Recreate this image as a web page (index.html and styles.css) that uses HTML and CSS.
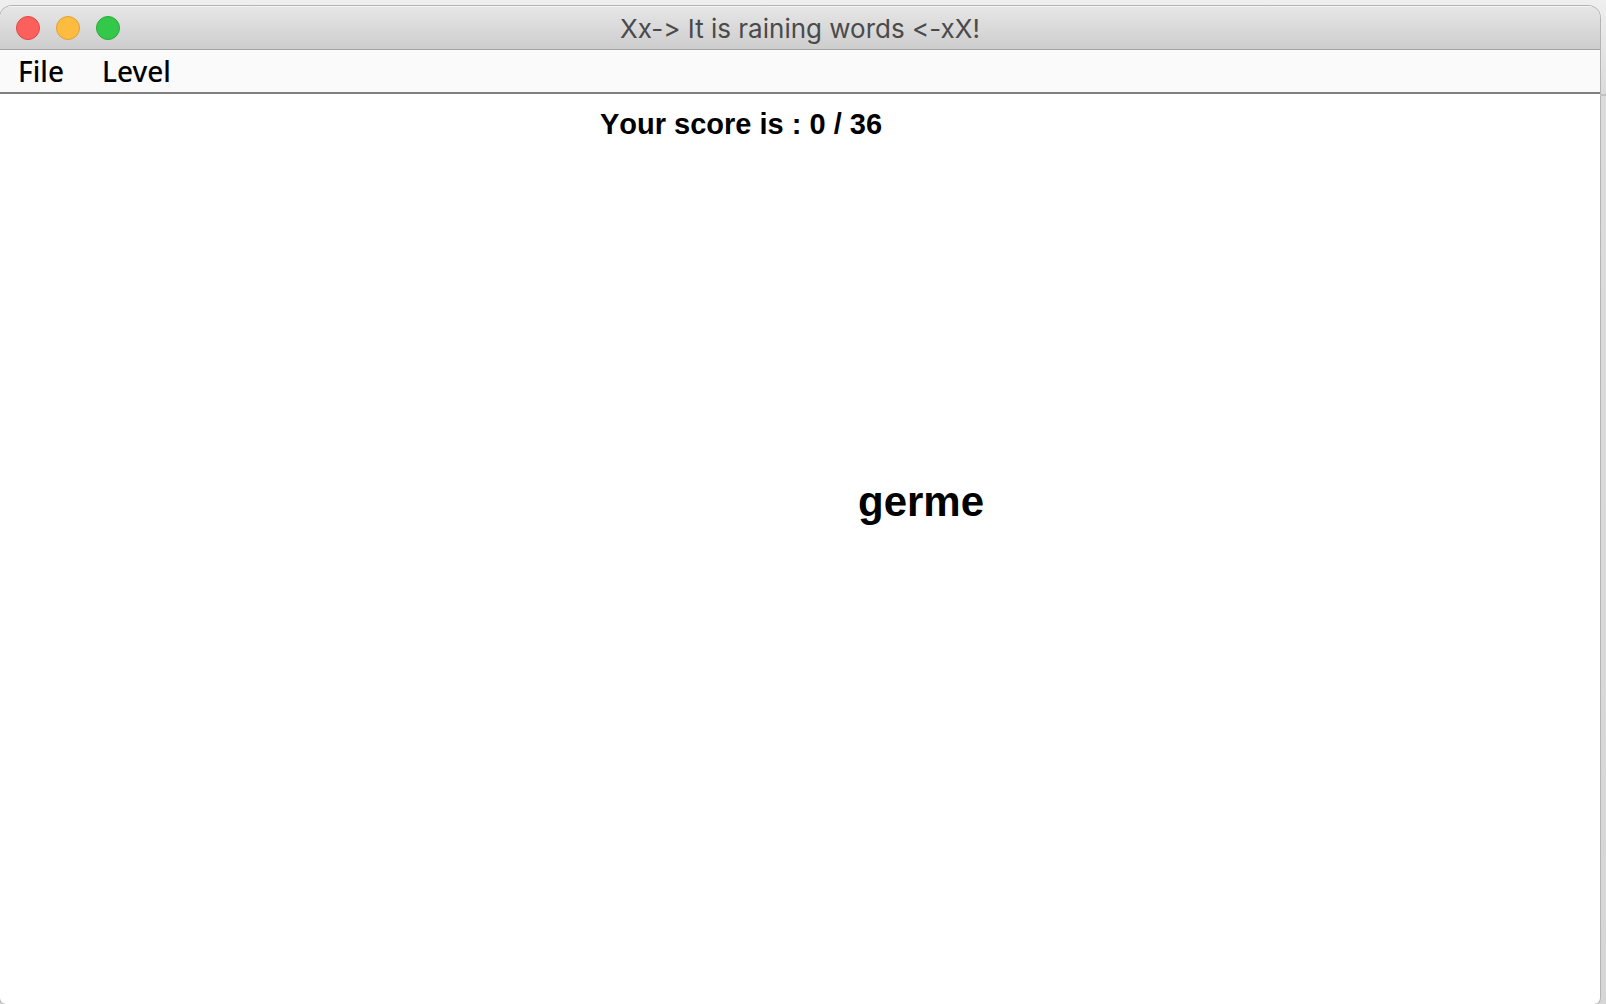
FILE: index.html
```
<!DOCTYPE html>
<html lang="en">
<head>
<meta charset="utf-8">
<title>Xx-&gt; It is raining words &lt;-xX!</title>
<link rel="stylesheet" href="styles.css">
</head>
<body>
<div class="desktop">
  <div class="window">
    <header class="titlebar">
      <div class="controls">
        <button class="control close" type="button" aria-label="Close"></button>
        <button class="control minimize" type="button" aria-label="Minimize"></button>
        <button class="control maximize" type="button" aria-label="Maximize"></button>
      </div>
      <h1 class="title">Xx-&gt; It is raining words &lt;-xX!</h1>
    </header>
    <nav class="menubar">
      <button class="menu" type="button">File</button>
      <button class="menu" type="button">Level</button>
    </nav>
    <main class="playfield">
      <p class="score">Your score is : 0 / 36</p>
      <span class="word">germe</span>
    </main>
  </div>
  <div class="backdrop"></div>
</div>
</body>
</html>
```
FILE: styles.css
```
* {
  box-sizing: border-box;
}

body {
  margin: 0;
  font-family: "Liberation Sans", Arial, sans-serif;
  color: #000;
}

.desktop {
  display: grid;
  grid-template-columns: 1fr 6px;
  min-height: 100vh;
  padding-top: 6px;
  background: linear-gradient(#efefef, #dcdcdc 90px, #d6d6d6);
}

.window {
  display: flex;
  flex-direction: column;
  border-radius: 12px 12px 6px 6px;
  background: #fff;
  box-shadow: 0 0 0 1px #b4b4b4;
  overflow: hidden;
}

/* Edge of the window that lies behind, right of this one */
.backdrop {
  height: 90px;
  border-bottom: 2px solid #c2c2c2;
}

.titlebar {
  display: grid;
  grid-template-columns: 1fr auto 1fr;
  align-items: center;
  height: 44px;
  padding: 0 16px;
  border-top: 1px solid #f4f4f4;
  border-bottom: 1px solid #a2a2a2;
  background: linear-gradient(#e6e6e6, #cdcdcd);
}

.controls {
  display: flex;
  gap: 16px;
}

.control {
  width: 24px;
  height: 24px;
  padding: 0;
  border: 1px solid;
  border-radius: 50%;
}

.close {
  border-color: #e2463f;
  background: #fc605c;
}

.minimize {
  border-color: #dfa033;
  background: #fdbc40;
}

.maximize {
  border-color: #27aa35;
  background: #34c84a;
}

.title {
  margin: 0;
  padding-top: 2px;
  font: 400 26px/32px Inter, sans-serif;
  font-feature-settings: "calt" 0;
  color: #4a4a4a;
}

.menubar {
  display: flex;
  gap: 38px;
  height: 44px;
  padding: 0 18px;
  border-bottom: 2px solid #808080;
  background: #fafafa;
}

.menu {
  padding: 0;
  border: 0;
  background: none;
  font: 500 28px/42px "Noto Sans", sans-serif;
  color: #000;
}

.playfield {
  position: relative;
  flex: 1;
}

.score {
  margin: 0;
  padding: 12px 0 0 600px;
  font-size: 29px;
  line-height: 36px;
  font-weight: 700;
  font-kerning: none;
}

.word {
  position: absolute;
  top: 384px;
  left: 858px;
  font-size: 42px;
  line-height: 48px;
  font-weight: 700;
}
```
